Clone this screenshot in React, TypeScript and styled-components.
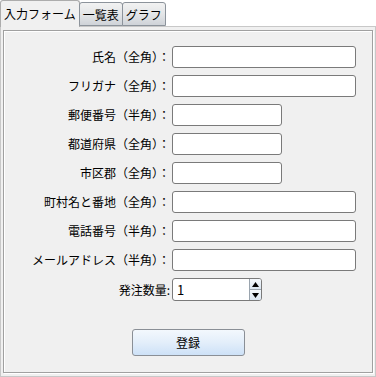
import React, {useState} from "react";
import styled, {createGlobalStyle} from "styled-components";

const FONT = `"Noto Sans CJK JP", "Noto Sans", sans-serif`;

const GlobalStyle = createGlobalStyle`
  html, body {
    margin: 0;
    padding: 0;
    background: #ffffff;
  }
  * {
    box-sizing: border-box;
  }
`;

interface Field {
    label: string;
    size: "long" | "short";
}

const FIELDS: Field[] = [
    {label: "氏名（全角）：", size: "long"},
    {label: "フリガナ（全角）：", size: "long"},
    {label: "郵便番号（半角）：", size: "short"},
    {label: "都道府県（全角）：", size: "short"},
    {label: "市区郡（全角）：", size: "short"},
    {label: "町村名と番地（全角）：", size: "long"},
    {label: "電話番号（半角）：", size: "long"},
    {label: "メールアドレス（半角）：", size: "long"},
];

const TABS = ["入力フォーム", "一覧表", "グラフ"];

const App: React.FunctionComponent = () => {
    const [active, setActive] = useState(0);
    const [qty, setQty] = useState(1);

    return (
        <Window>
            <GlobalStyle/>
            <TabStrip>
                {TABS.map((t, i) => (
                    <Tab key={t} $active={i === active} onClick={() => setActive(i)}>
                        {t}
                    </Tab>
                ))}
            </TabStrip>
            <Panel>
                <GroupBox>
                    <FormGrid>
                        {FIELDS.map(f => (
                            <React.Fragment key={f.label}>
                                <Label>{f.label}</Label>
                                <TextBox $size={f.size}/>
                            </React.Fragment>
                        ))}
                        <Label>発注数量:</Label>
                        <Spinner>
                            <SpinValue>{qty}</SpinValue>
                            <SpinButtons>
                                <SpinButton onClick={() => setQty(qty + 1)}>
                                    <svg width="7" height="5" viewBox="0 0 7 5">
                                        <path d="M3.5 0 L7 5 L0 5 Z" fill="#000"/>
                                    </svg>
                                </SpinButton>
                                <SpinButton onClick={() => setQty(Math.max(0, qty - 1))}>
                                    <svg width="7" height="5" viewBox="0 0 7 5">
                                        <path d="M0 0 L7 0 L3.5 5 Z" fill="#000"/>
                                    </svg>
                                </SpinButton>
                            </SpinButtons>
                        </Spinner>
                    </FormGrid>
                    <ButtonRow>
                        <SubmitButton>登録</SubmitButton>
                    </ButtonRow>
                </GroupBox>
            </Panel>
        </Window>
    );
};

export default App;

const Window = styled.div`
  width: 376px;
  height: 377px;
  display: flex;
  flex-direction: column;
  font-family: ${FONT};
  font-size: 12px;
  color: #000;
`

const TabStrip = styled.div`
  height: 26px;
  display: flex;
  align-items: flex-end;
  position: relative;
  z-index: 1;
`

const Tab = styled.div<{ $active: boolean }>`
  height: ${p => p.$active ? "27px" : "24px"};
  margin-bottom: ${p => p.$active ? "-1px" : "0"};
  padding: ${p => p.$active ? "0 3px 2px 3px" : "0 3px"};
  display: flex;
  align-items: center;
  border: 1px solid ${p => p.$active ? "#acacac" : "#8c939b"};
  border-bottom: ${p => p.$active ? "none" : "1px solid #8c939b"};
  border-radius: 3px 3px 0 0;
  background: ${p => p.$active
    ? "#f0f0f0"
    : "linear-gradient(to bottom, #f2f2f2 0%, #e4e6e8 50%, #cfd3d8 100%)"};
  white-space: nowrap;
  cursor: default;
  & + & {
    margin-left: -1px;
  }
`

const Panel = styled.div`
  flex: 1;
  border: 1px solid #c8c8c8;
  background: #f0f0f0;
  padding: 3px 2px 3px 2px;
  display: flex;
`

const GroupBox = styled.div`
  flex: 1;
  border: 1px solid #a0a0a0;
  box-shadow: 1px 1px 0 #ffffff, inset 1px 1px 0 #ffffff;
  display: flex;
  flex-direction: column;
  padding: 15px 0 0 0;
`

const FormGrid = styled.div`
  display: grid;
  grid-template-columns: 166px 1fr;
  column-gap: 2px;
  row-gap: 7px;
  align-items: center;
`

const Label = styled.div`
  text-align: right;
  white-space: nowrap;
  line-height: 22px;
`

const TextBox = styled.input.attrs({type: "text"})<{ $size: "long" | "short" }>`
  width: ${p => p.$size === "long" ? "184px" : "110px"};
  height: 22px;
  border: 1px solid #7a7a7a;
  border-radius: 3px;
  background: #ffffff;
  font-family: ${FONT};
  font-size: 12px;
  padding: 0 4px;
  outline: none;
`

const Spinner = styled.div`
  width: 90px;
  height: 23px;
  border: 1px solid #7a7a7a;
  border-radius: 3px;
  background: #ffffff;
  display: flex;
  overflow: hidden;
`

const SpinValue = styled.div`
  flex: 1;
  padding-left: 4px;
  font-size: 13px;
  line-height: 21px;
`

const SpinButtons = styled.div`
  width: 12px;
  display: flex;
  flex-direction: column;
  border-left: 1px solid #9aa4ae;
`

const SpinButton = styled.div`
  flex: 1;
  display: flex;
  align-items: center;
  justify-content: center;
  background: linear-gradient(to bottom, #f4f8fc, #dbe6f2);
  & + & {
    border-top: 1px solid #9aa4ae;
  }
`

const ButtonRow = styled.div`
  display: flex;
  justify-content: center;
  padding-top: 28px;
`

const SubmitButton = styled.button`
  width: 113px;
  height: 27px;
  border: 1px solid #8a8f96;
  border-radius: 3px;
  background: linear-gradient(to bottom, #f3f8fd 0%, #e3eefa 50%, #cde1f7 100%);
  font-family: ${FONT};
  font-size: 12px;
  color: #000;
  padding: 0;
`
